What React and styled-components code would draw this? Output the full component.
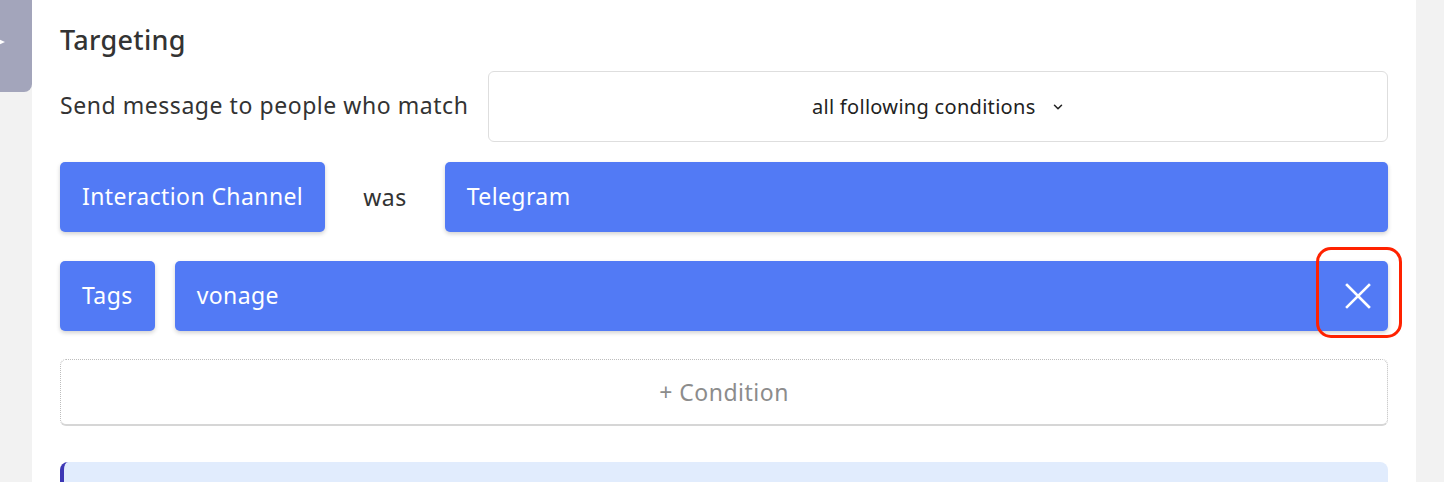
import React from "react";
import styled, { createGlobalStyle } from "styled-components";

const Global = createGlobalStyle`
  html, body { margin: 0; padding: 0; background: #f2f2f2; }
  body { font-family: "Noto Sans", "Lato", sans-serif; color: #333; }
  * { box-sizing: border-box; }
`;

const Page = styled.div`
  display: flex;
  height: 482px;
  overflow: hidden;
`;

const Sidebar = styled.div`
  width: 32px;
  flex: none;
`;

const Tab = styled.div`
  position: relative;
  width: 32px;
  height: 92px;
  background: #a3a5bb;
  border-bottom-right-radius: 8px;
`;

const TabArrow = styled.div`
  position: absolute;
  left: -4px;
  top: 38px;
  width: 0;
  height: 0;
  border-top: 4px solid transparent;
  border-bottom: 4px solid transparent;
  border-left: 9px solid #fff;
`;

const Card = styled.div`
  flex: 1;
  margin-right: 28px;
  background: #fff;
  padding: 23px 28px 0;
`;

const Title = styled.h2`
  margin: 0 0 14px;
  font-size: 27px;
  font-weight: 500;
  letter-spacing: 0.3px;
  line-height: 34px;
  color: #333;
`;

const MatchRow = styled.div`
  display: flex;
  align-items: center;
  gap: 20px;
  margin-bottom: 20px;
`;

const Label = styled.span`
  font-size: 23px;
  letter-spacing: 0.55px;
  color: #333;
  white-space: nowrap;
  margin-top: -3px;
`;

const Select = styled.div`
  flex: 1;
  height: 71px;
  border: 1px solid #dedede;
  border-radius: 6px;
  display: flex;
  align-items: center;
  justify-content: center;
  gap: 15px;
  font-size: 20px;
  letter-spacing: 0.3px;
  color: #222;
`;

const ConditionRow = styled.div`
  display: flex;
  align-items: center;
  gap: 20px;
  margin-bottom: ${(p) => p.$mb || 0}px;
`;

const Pill = styled.div`
  position: relative;
  height: 70px;
  background: #527af5;
  color: #fff;
  border-radius: 5px;
  box-shadow: 0 2px 4px rgba(0, 0, 0, 0.18);
  display: flex;
  align-items: center;
  font-size: 23px;
  letter-spacing: 0.4px;
  padding: 0 22px 3px;
  white-space: nowrap;
  flex: ${(p) => (p.$grow ? 1 : "none")};
`;

const Word = styled.span`
  font-size: 23px;
  letter-spacing: 0.5px;
  color: #333;
  padding: 0 18px;
`;

const CloseBtn = styled.button`
  margin-left: auto;
  margin-right: -14px;
  margin-bottom: -3px;
  width: 44px;
  height: 44px;
  border: none;
  background: transparent;
  display: flex;
  align-items: center;
  justify-content: center;
  padding: 0;
  cursor: pointer;
`;

const Highlight = styled.div`
  position: absolute;
  right: -14px;
  top: -14px;
  width: 86px;
  height: 91px;
  border: 3px solid #ff2200;
  border-radius: 15px;
  pointer-events: none;
`;

const AddCondition = styled.div`
  height: 67px;
  margin-top: 28px;
  border: 1px dotted #bdbdbd;
  border-bottom: 2px solid #d6d6d6;
  border-radius: 6px;
  display: flex;
  align-items: center;
  justify-content: center;
  font-size: 23px;
  letter-spacing: 0.5px;
  color: #8c8c8c;
`;

const Info = styled.div`
  margin-top: 36px;
  height: 60px;
  background: #e1ecfd;
  border-left: 4px solid #3c37b5;
  border-radius: 8px;
`;

export default function App() {
  return (
    <>
      <Global />
      <Page>
        <Sidebar>
          <Tab>
            <TabArrow />
          </Tab>
        </Sidebar>
        <Card>
          <Title>Targeting</Title>
          <MatchRow>
            <Label>Send message to people who match</Label>
            <Select>
              <span>all following conditions</span>
              <svg width="14" height="14" viewBox="0 0 24 24" fill="none" stroke="#222" strokeWidth="2.6" strokeLinecap="round" strokeLinejoin="round">
                <path d="M6 9l6 6 6-6" />
              </svg>
            </Select>
          </MatchRow>
          <ConditionRow $mb={29}>
            <Pill>Interaction Channel</Pill>
            <Word>was</Word>
            <Pill $grow>Telegram</Pill>
          </ConditionRow>
          <ConditionRow>
            <Pill>Tags</Pill>
            <Pill $grow>
              vonage
              <CloseBtn aria-label="Remove">
                <svg width="26" height="26" viewBox="0 0 26 26" stroke="#fff" strokeWidth="2.6" strokeLinecap="square">
                  <path d="M2 2L24 24M24 2L2 24" />
                </svg>
              </CloseBtn>
              <Highlight />
            </Pill>
          </ConditionRow>
          <AddCondition>+ Condition</AddCondition>
          <Info />
        </Card>
      </Page>
    </>
  );
}
